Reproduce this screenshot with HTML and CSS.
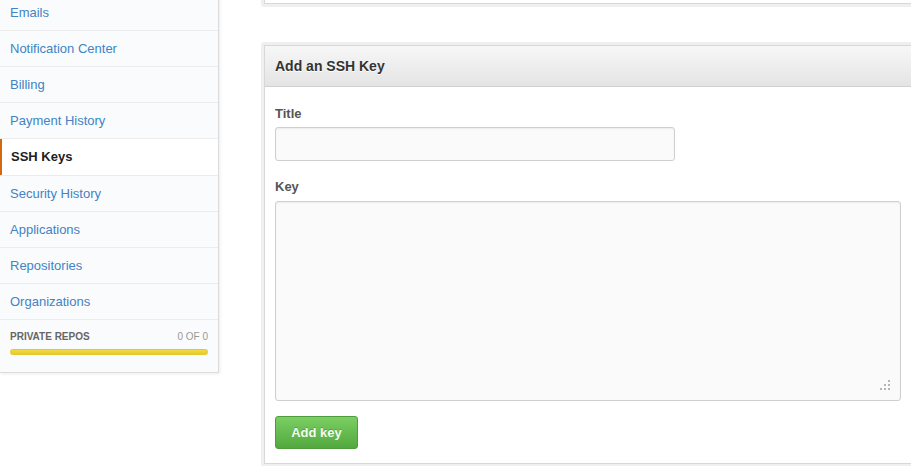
FILE: index.html
```html
<!DOCTYPE html>
<html lang="en">
<head>
<meta charset="utf-8">
<title>SSH Keys</title>
<link rel="stylesheet" href="styles.css">
</head>
<body>
<div class="page">
  <aside class="sidebar">
    <ul class="menu">
      <li><a href="#">Emails</a></li>
      <li><a href="#">Notification Center</a></li>
      <li><a href="#">Billing</a></li>
      <li><a href="#">Payment History</a></li>
      <li class="active"><a href="#">SSH Keys</a></li>
      <li><a href="#">Security History</a></li>
      <li><a href="#">Applications</a></li>
      <li><a href="#">Repositories</a></li>
      <li><a href="#">Organizations</a></li>
    </ul>
    <div class="repos">
      <div class="repos-head">
        <span class="repos-label">Private repos</span>
        <span class="repos-count">0 of 0</span>
      </div>
      <div class="repos-bar"></div>
    </div>
  </aside>
  <main class="main">
    <section class="boxed boxed-top">
      <div class="boxed-inner top-inner"></div>
    </section>
    <section class="boxed">
      <div class="boxed-inner">
        <h3 class="boxed-head">Add an SSH Key</h3>
        <form class="boxed-body">
          <label class="field-label" for="title">Title</label>
          <input class="field-input" id="title" type="text">
          <label class="field-label key-label" for="key">Key</label>
          <div class="textarea-wrap">
            <textarea class="field-textarea" id="key"></textarea>
            <svg class="grip" width="12" height="12" viewBox="0 0 12 12" aria-hidden="true">
              <rect x="9" y="0" width="2" height="2"/>
              <rect x="5" y="4" width="2" height="2"/>
              <rect x="9" y="4" width="2" height="2"/>
              <rect x="1" y="8" width="2" height="2"/>
              <rect x="5" y="8" width="2" height="2"/>
              <rect x="9" y="8" width="2" height="2"/>
            </svg>
          </div>
          <button class="btn-add" type="button">Add key</button>
        </form>
      </div>
    </section>
  </main>
</div>
</body>
</html>
```

FILE: styles.css
```css
html, body {
  margin: 0;
  padding: 0;
  background: #fff;
  overflow: hidden;
}

body {
  font-family: "Liberation Sans", Arial, Helvetica, sans-serif;
  font-size: 13px;
  color: #333;
}

.page {
  display: flex;
  align-items: flex-start;
  gap: 42px;
  width: 916px;
}

/* Sidebar */
.sidebar {
  flex: 0 0 218px;
  width: 218px;
  margin-top: -5px;
  background: #fafbfc;
  border-right: 1px solid #dcdcdc;
  border-bottom: 1px solid #dcdcdc;
  box-shadow: 1px 1px 3px rgba(0, 0, 0, 0.08);
}

.menu {
  list-style: none;
  margin: 0;
  padding: 0;
}

.menu li {
  border-bottom: 1px solid #ececec;
}

.menu a {
  display: block;
  height: 35px;
  line-height: 35px;
  padding: 0 10px;
  color: #4183c4;
  text-decoration: none;
  font-size: 13px;
}

.menu li.active a {
  height: 36px;
  line-height: 36px;
  background: #fff;
  border-left: 2px solid #d26911;
  padding-left: 9px;
  color: #222;
  font-weight: bold;
}

.repos {
  padding: 11px 10px 17px;
}

.repos-head {
  display: flex;
  justify-content: space-between;
  line-height: 12px;
  font-size: 10px;
  text-transform: uppercase;
}

.repos-label {
  font-weight: bold;
  color: #666;
}

.repos-count {
  color: #999;
}

.repos-bar {
  margin-top: 6px;
  height: 6px;
  border-radius: 3px;
  background: linear-gradient(#f2dc4a, #e4c82a);
  box-shadow: inset 0 1px 0 rgba(0, 0, 0, 0.08);
}

/* Main */
.main {
  flex: 0 0 654px;
  width: 654px;
}

.boxed {
  background: #efefef;
  padding: 3px;
  border-radius: 3px;
}

.boxed-top {
  margin-top: -41px;
  margin-bottom: 35px;
}

.boxed-inner {
  background: #fff;
  border: 1px solid #d8d8d8;
}

.top-inner {
  height: 40px;
}

.boxed-head {
  margin: 0;
  padding: 12px 10px;
  line-height: 16px;
  font-size: 14px;
  font-weight: bold;
  color: #333;
  text-shadow: 0 1px 0 #fff;
  background: linear-gradient(#f7f7f7, #e4e4e4);
  border-bottom: 1px solid #d0d0d0;
}

.boxed-body {
  display: flex;
  flex-direction: column;
  align-items: flex-start;
  padding: 19px 10px 14px;
}

.field-label {
  display: block;
  line-height: 16px;
  font-size: 13px;
  font-weight: bold;
  color: #555;
}

.key-label {
  margin-top: 18px;
}

.field-input {
  margin: 5px 0 0;
  width: 400px;
  height: 34px;
  box-sizing: border-box;
  background: #fafafa;
  border: 1px solid #cfcfcf;
  border-radius: 3px;
  box-shadow: inset 0 1px 2px rgba(0, 0, 0, 0.06);
  font: inherit;
  padding: 0 8px;
}

.textarea-wrap {
  position: relative;
  margin-top: 6px;
  align-self: stretch;
}

.field-textarea {
  display: block;
  width: 100%;
  height: 200px;
  box-sizing: border-box;
  margin: 0;
  background: #fafafa;
  border: 1px solid #cfcfcf;
  border-radius: 3px;
  box-shadow: inset 0 1px 2px rgba(0, 0, 0, 0.06);
  resize: none;
  font: inherit;
}

.grip {
  position: absolute;
  right: 10px;
  bottom: 9px;
  fill: #b5b5b5;
}

.btn-add {
  margin-top: 15px;
  width: 83px;
  height: 33px;
  padding: 0;
  border: 1px solid #4f9c3d;
  border-radius: 3px;
  background: linear-gradient(#7bcf63, #52a83e);
  color: #f4fbef;
  font-family: inherit;
  font-size: 13px;
  font-weight: bold;
  text-shadow: 0 -1px 0 rgba(0, 0, 0, 0.2);
  cursor: pointer;
}
```
